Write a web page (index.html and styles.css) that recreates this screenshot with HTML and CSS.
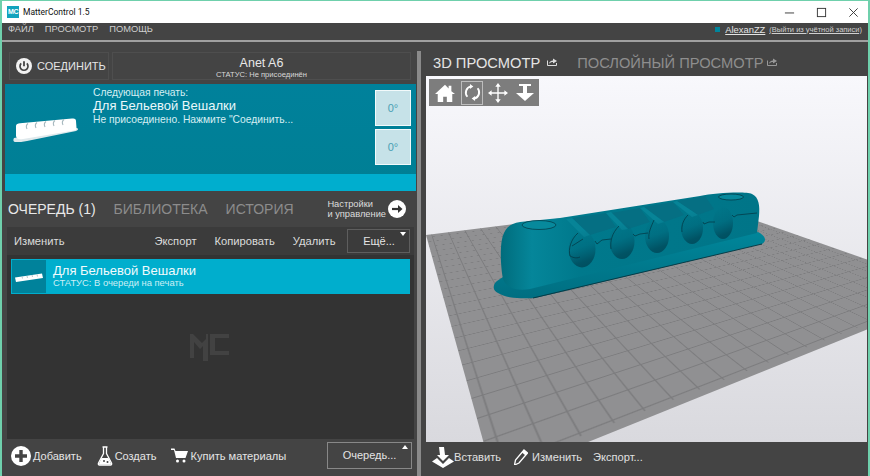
FILE: index.html
```html
<!DOCTYPE html>
<html lang="ru">
<head>
<meta charset="utf-8">
<title>MatterControl 1.5</title>
<link rel="stylesheet" href="styles.css">
</head>
<body>
<div class="window">
  <header class="titlebar">
    <span class="app-icon">MC</span>
    <span class="app-title">MatterControl 1.5</span>
    <div class="win-controls">
      <svg class="win-btn" viewBox="0 0 12 12"><path d="M1 6.500h10" stroke="#333" fill="none"/></svg>
      <svg class="win-btn" viewBox="0 0 12 12"><rect x="1.500" y="1.500" width="9" height="9" stroke="#333" fill="none"/></svg>
      <svg class="win-btn" viewBox="0 0 12 12"><path d="M1.500 1.500l9 9M10.500 1.500l-9 9" stroke="#333" fill="none"/></svg>
    </div>
  </header>

  <nav class="menubar">
    <span class="menu-item">ФАЙЛ</span>
    <span class="menu-item">ПРОСМОТР</span>
    <span class="menu-item">ПОМОЩЬ</span>
    <div class="account">
      <i class="account-dot"></i>
      <u class="account-name">AlexanZZ</u>
      <u class="account-out">(Выйти из учётной записи)</u>
    </div>
  </nav>

  <main class="main">
    <section class="left">
      <div class="connect-row">
        <div class="connect-btn">
          <svg class="ico-power" viewBox="0 0 16 16"><circle cx="8" cy="8" r="8" fill="#f2f2f2"/><path d="M5.200 5.400a4 4 0 1 0 5.600 0" stroke="#444" stroke-width="1.700" fill="none"/><path d="M8 3.200v5" stroke="#444" stroke-width="1.800"/></svg>
          <span>СОЕДИНИТЬ</span>
        </div>
        <div class="printer-box">
          <div class="printer-name">Anet A6</div>
          <div class="printer-status">СТАТУС: Не присоединён</div>
        </div>
      </div>

      <div class="print-panel">
        <div class="print-body">
          <svg class="print-thumb" viewBox="0 0 66 25">
            <path d="M1 20C0 22 0 24 3 24C6 24 10 24 14 23L63 13C65 12 66 11 64 10Z" fill="#dfe9ec"/>
            <path d="M3 8C3 6 5 5.500 7 5.300L59 .5C62 .2 63 1 63 3L63.500 10C63.500 11.500 63 12 61 12.500L10 21C6 21.800 3.500 21 3 18Z" fill="#fff"/>
            <path d="M15 5.500C13 7 13 9 14 11M24 4.500C22 6 22 8 23 10M33 3.500C31 5 31 7 32 9M42 2.500C40 4 40 6 41 8M51 1.500C49 3 49 5 50 7" stroke="#a6b8be" stroke-width="1.100" fill="none"/>
          </svg>
          <div class="print-text">
            <div class="print-next">Следующая печать:</div>
            <div class="print-name">Для Бельевой Вешалки</div>
            <div class="print-msg">Не присоединено. Нажмите "Соединить...</div>
          </div>
          <div class="temps">
            <div class="temp">0°</div>
            <div class="temp">0°</div>
          </div>
        </div>
        <div class="print-strip"></div>
      </div>

      <div class="tabs">
        <span class="tab active">ОЧЕРЕДЬ (1)</span>
        <span class="tab">БИБЛИОТЕКА</span>
        <span class="tab">ИСТОРИЯ</span>
        <div class="settings">
          <span class="settings-text">Настройки<br>и управление</span>
          <svg class="ico-arrow" viewBox="0 0 18 18"><circle cx="9" cy="9" r="9" fill="#fff"/><path d="M4 9h8" stroke="#333" stroke-width="2.200"/><path d="M10 5l4.500 4-4.500 4z" fill="#333"/></svg>
        </div>
      </div>

      <div class="queue">
        <div class="queue-tools">
          <span class="q-tool q-edit">Изменить</span>
          <span class="q-tool">Экспорт</span>
          <span class="q-tool">Копировать</span>
          <span class="q-tool">Удалить</span>
          <span class="more-btn dim">Ещё...<i class="caret"></i></span>
        </div>
        <div class="queue-list">
          <div class="queue-item">
            <div class="item-thumb">
              <svg viewBox="0 0 30 12" class="item-thumb-svg"><path d="M1 6.500L28 2.500 29 7 2 11z" fill="#fff"/><path d="M8 5.500l.5 2M13 5l.5 2M18 4l.5 2M23 3.500l.5 2" stroke="#a6b8be" stroke-width=".8" fill="none"/></svg>
            </div>
            <div class="item-text">
              <div class="item-name">Для Бельевой Вешалки</div>
              <div class="item-status">СТАТУС: В очереди на печать</div>
            </div>
          </div>
          <svg class="watermark" viewBox="0 0 40 30"><path d="M0 3h3l9 9 4-4V3h2v27h-5V15l-3 3L4 11v16H0zM20 3h19v4H25v13h14v4H20z" fill="#424242"/></svg>
        </div>
      </div>

      <div class="bottom-bar">
        <span class="action">
          <svg class="ico-plus" viewBox="0 0 20 20"><circle cx="10" cy="10" r="10" fill="#fff"/><path d="M10 4v12M4 10h12" stroke="#444" stroke-width="3.400"/></svg>
          <span>Добавить</span>
        </span>
        <span class="action act-create">
          <svg class="ico-flask" viewBox="0 0 16 20"><path d="M5.500 1h5M6.500 1.500v6L1.500 17c-.5 1 0 2 1 2h11c1 0 1.500-1 1-2L9.500 7.500v-6" stroke="#fff" stroke-width="1.300" fill="none"/><path d="M4.500 12h7l2.500 5.500c0 .5-.5 1-1 1H3c-.5 0-1-.5-1-1z" fill="#fff"/><circle cx="7" cy="15" r="1" fill="#444"/><circle cx="10.500" cy="16" r="1" fill="#444"/></svg>
          <span>Создать</span>
        </span>
        <span class="action act-buy">
          <svg class="ico-cart" viewBox="0 0 17 15"><path d="M0 .5h3.500l1 2.500H17l-2.500 7H5L3 2H0z" fill="#fff"/><circle cx="6.500" cy="13" r="1.500" fill="#fff"/><circle cx="13" cy="13" r="1.500" fill="#fff"/></svg>
          <span>Купить материалы</span>
        </span>
        <span class="more-btn queue-btn">Очередь...<i class="caret"></i></span>
      </div>
    </section>

    <div class="gutter"></div>

    <section class="right">
      <div class="view-tabs">
        <span class="view-tab active">3D ПРОСМОТР</span>
        <svg class="ico-share" viewBox="0 0 10 8"><path d="M.5 2.500v5h9V5" stroke="#ddd" fill="none"/><path d="M2 6c0-2 2-3.500 4-3.500V.500L10 3 6 5.500V4C4.500 4 3 4.500 2 6z" fill="#ddd"/></svg>
        <span class="view-tab second">ПОСЛОЙНЫЙ ПРОСМОТР</span>
        <svg class="ico-share ico-share-near" viewBox="0 0 10 8"><path d="M.5 2.500v5h9V5" stroke="#999" fill="none"/><path d="M2 6c0-2 2-3.500 4-3.500V.500L10 3 6 5.500V4C4.500 4 3 4.500 2 6z" fill="#999"/></svg>
      </div>

      <div class="viewport">
        <div class="bed"><div class="bed-grid"></div></div>
        <svg class="model" viewBox="426 75 441 366">
          <defs>
            <linearGradient id="endGrad" x1="0" x2="1" y1="0" y2="0">
              <stop offset="0" stop-color="#006c7c"/>
              <stop offset=".12" stop-color="#05869a"/>
              <stop offset=".3" stop-color="#00798c"/>
              <stop offset="1" stop-color="#007588"/>
            </linearGradient>
            <linearGradient id="holeGrad" x1=".35" x2=".6" y1="0" y2="1">
              <stop offset="0" stop-color="#00566a" stop-opacity="0"/>
              <stop offset=".45" stop-color="#00566a" stop-opacity=".25"/>
              <stop offset=".85" stop-color="#004f60" stop-opacity=".9"/>
              <stop offset="1" stop-color="#004f60"/>
            </linearGradient>
            <linearGradient id="flangeGrad" x1="0" x2="0" y1="0" y2="1">
              <stop offset="0" stop-color="#00869a"/>
              <stop offset="1" stop-color="#006e81"/>
            </linearGradient>
          </defs>
          <path d="M497 280C492 284 493 290 498 292C506 297 520 298 535 297L762 243C767 240 766 235 758 231L503 276Z" fill="url(#flangeGrad)"/>
          <path d="M533 297L762 243" stroke="#04343f" stroke-width=".9" fill="none"/>
          <path d="M503 278C500 260 500 240 504 232C508 223 515 221 530 220L560 217L700 195C715 192 745 190 752 193C759 196 760 205 759 215L757 232L530 288C515 291 505 285 503 278Z" fill="url(#endGrad)"/>
          <path d="M572 217L606 212L616 226L590 234Z" fill="#056f83"/>
          <path d="M611 212L640 207L650 221L628 228Z" fill="#056f83"/>
          <path d="M644 206L673 201L684 214L664 221Z" fill="#056f83"/>
          <path d="M677 200L705 195L714 208L698 214Z" fill="#056f83"/>
          <path d="M566 218L572 217L590 234L584 236Z" fill="#078497"/>
          <path d="M606 212L611 211L628 228L622 229Z" fill="#078497"/>
          <path d="M640 207L644 206L664 221L658 223Z" fill="#078497"/>
          <path d="M673 201L677 200L698 214L692 216Z" fill="#078497"/>
          <ellipse cx="582" cy="248" rx="13.500" ry="18.500" fill="url(#holeGrad)"/>
          <ellipse cx="622" cy="240" rx="12.500" ry="18" fill="url(#holeGrad)"/>
          <ellipse cx="657" cy="235" rx="12" ry="17" fill="url(#holeGrad)"/>
          <ellipse cx="692" cy="227" rx="11" ry="16" fill="url(#holeGrad)"/>
          <ellipse cx="723" cy="222" rx="10" ry="16" fill="url(#holeGrad)"/>
          <ellipse cx="539" cy="224" rx="17" ry="4.500" fill="#07899c" stroke="#04343f" stroke-width=".7"/>
          <ellipse cx="731" cy="196" rx="12.500" ry="3" fill="#07899c" stroke="#04343f" stroke-width=".7"/>
          <path d="M595 240l2 3 5-4 9-1M633 233l2 2 5-2 8-1M703 221l1 2 5-2 6 0M732 214l2 2 3-2 20-2M578 232C571 238 568 248 570 255M619 225C612 232 610 240 611 248M654 219C651 226 648 232 649 238M688 214C684 218 681 224 682 231M580 256C576 258 572 256 570 255M583 238L572 245" stroke="#04343f" stroke-width=".7" fill="none"/>
        </svg>
        <div class="view-tools">
          <svg class="tool-ico" viewBox="0 0 22 20"><path d="M11 1L0 11h3v9h6v-6h4v6h6v-9h3L18 8V2h-3v3z" fill="#fff"/></svg>
          <span class="tool-box">
            <svg class="tool-ico" viewBox="0 0 20 20"><path d="M4 15A7.500 7.500 0 0 1 8 2.800M16 5a7.500 7.500 0 0 1-4 12.200" stroke="#fff" stroke-width="2.200" fill="none"/><path d="M7 0l4 3-4 3zM13 20l-4-3 4-3z" fill="#fff"/></svg>
          </span>
          <svg class="tool-ico tool-move" viewBox="0 0 22 22"><path d="M11 2v18M2 11h18" stroke="#fff" stroke-width="1.500"/><path d="M11 0l3 4H8zM11 22l3-4H8zM0 11l4-3v6zM22 11l-4-3v6z" fill="#fff"/></svg>
          <svg class="tool-ico tool-drop" viewBox="0 0 20 20"><path d="M4 1h12v2h-4v7h7l-9 8-9-8h7V3H4z" fill="#fff"/></svg>
        </div>
      </div>

      <div class="view-bottom">
        <span class="action act-insert">
          <svg class="ico-insert" viewBox="0 0 22 22"><path d="M7 1h5l1 8h4l-6 6-6-6h3z" fill="#fff"/><path d="M5 12l6 6 6-6 5 3.500L11 22 0 15.500z" fill="#fff"/></svg>
          <span>Вставить</span>
        </span>
        <span class="action act-edit">
          <svg class="ico-pencil" viewBox="0 0 14 16"><path d="M10 1l3.500 3L5 14l-4.500 2L1.500 11z" fill="none" stroke="#fff" stroke-width="1.300"/><path d="M10 1l3.500 3-2 2.500L8 3.500z" fill="#fff"/></svg>
          <span>Изменить</span>
        </span>
        <span class="action act-export">Экспорт...</span>
      </div>
    </section>
  </main>
</div>
</body>
</html>
```

FILE: styles.css
```css
* { box-sizing: border-box; }
html, body { margin: 0; padding: 0; }
body {
  width: 870px;
  height: 476px;
  overflow: hidden;
  background: #444;
  font-family: "Liberation Sans", Arial, sans-serif;
  color: #e6e6e6;
}
.window {
  width: 870px;
  height: 476px;
  display: flex;
  flex-direction: column;
  border: solid #6fd0ac;
  border-width: 1px 2px 0 2px;
}

/* title bar */
.titlebar {
  height: 22px;
  flex: none;
  background: #fff;
  display: flex;
  align-items: center;
  padding-left: 5px;
  color: #111;
}
.app-icon {
  width: 12px;
  height: 12px;
  background: #12a3bd;
  color: #fff;
  font-size: 7px;
  font-weight: bold;
  line-height: 12px;
  text-align: center;
  letter-spacing: -.5px;
}
.app-title {
  margin-left: 4px;
  font: 8.500px Roboto, sans-serif;
}
.win-controls {
  margin-left: auto;
  display: flex;
  gap: 21px;
  padding-right: 9px;
}
.win-btn { width: 11px; height: 11px; display: block; }

/* menu */
.menubar {
  height: 19px;
  flex: none;
  display: flex;
  align-items: center;
  padding: 0 3px 5px 6px;
  gap: 11px;
  border-bottom: 2px solid #a0a0a0;
  font-size: 9.300px;
  color: #cfcfcf;
}
.account {
  margin-left: auto;
  display: flex;
  align-items: center;
  gap: 4px;
  padding-right: 3px;
}
.account-dot { width: 5px; height: 5px; background: #00859c; margin-right: 1px; }
.account-name { font-size: 9.400px; color: #e4e4e4; }
.account-out { font-size: 7.500px; color: #d0d0d0; }

/* layout */
.main {
  flex: 1;
  display: flex;
  min-height: 0;
  padding-left: 3px;
}
.left {
  width: 411px;
  flex: none;
  display: flex;
  flex-direction: column;
}
.gutter {
  width: 4px;
  flex: none;
  margin: 9px 5px 0 1px;
  background: #8a8a8a;
}
.right {
  flex: 1;
  min-width: 0;
  display: flex;
  flex-direction: column;
}

/* connect */
.connect-row {
  display: flex;
  gap: 3px;
  padding: 10px 5px 4px 4px;
  height: 42px;
  flex: none;
}
.connect-btn, .printer-box { border: 1px solid #4e4e4e; }
.connect-btn {
  width: 100px;
  display: flex;
  align-items: center;
  gap: 5px;
  padding-left: 6px;
  font-size: 11px;
  color: #e6e6e6;
}
.ico-power { width: 16px; height: 16px; flex: none; }
.printer-box {
  flex: 1;
  text-align: center;
  padding-top: 3px;
}
.printer-name { font-size: 12.500px; line-height: 14px; color: #e8e8e8; }
.printer-status { font-size: 7.600px; line-height: 9px; color: #d8d8d8; }

/* current print */
.print-panel {
  height: 107px;
  flex: none;
  display: flex;
  flex-direction: column;
  background: linear-gradient(#00819b, #007f94);
}
.print-body {
  flex: 1;
  display: flex;
  padding: 3px 5px 0 8px;
}
.print-thumb { width: 66px; height: 25px; margin-top: 31px; flex: none; }
.print-text { margin-left: 14px; color: #d5eef3; }
.print-next { font-size: 10.300px; line-height: 12px; }
.print-name { font-size: 13px; line-height: 13px; color: #eaf8fb; }
.print-msg { font-size: 10.300px; line-height: 15px; }
.temps {
  margin-left: auto;
  display: flex;
  flex-direction: column;
  gap: 3px;
  padding-top: 3px;
}
.temp {
  width: 36px;
  height: 36px;
  background: #c6e2e8;
  border: 1px solid #f2fafb;
  color: #4aa0b4;
  font-size: 11px;
  display: flex;
  align-items: center;
  justify-content: center;
}
.print-strip { height: 17px; flex: none; background: #00aece; }

/* tabs */
.tabs {
  height: 36px;
  flex: none;
  display: flex;
  align-items: center;
  padding: 0 10px 0 3px;
  gap: 18px;
}
.tab { font-size: 14px; color: #8c8c8c; }
.tab.active { color: #e8e8e8; }
.settings {
  margin-left: auto;
  display: flex;
  align-items: center;
  gap: 2px;
}
.settings-text { font-size: 9.300px; line-height: 10px; color: #ddd; }
.ico-arrow { width: 18px; height: 18px; }

/* queue */
.queue {
  flex: 1;
  min-height: 0;
  display: flex;
  flex-direction: column;
  margin: 0 2px;
  background: #333;
}
.queue-tools {
  height: 28px;
  flex: none;
  background: #3b3b3b;
  display: flex;
  align-items: center;
  padding-left: 7px;
  gap: 18px;
  font-size: 11.200px;
  color: #dcdcdc;
}
.q-edit { margin-right: 72px; }
.more-btn {
  position: relative;
  display: flex;
  align-items: center;
  justify-content: center;
  border: 1px solid #888;
  font-size: 11px;
  color: #e4e4e4;
}
.more-btn.dim {
  width: 63px;
  height: 24px;
  margin-left: -6px;
  border-color: #5e5e5e;
}
.caret {
  position: absolute;
  top: 2px;
  right: 3px;
  border: solid transparent;
  border-width: 0 3.500px 4px;
  border-bottom-color: #fff;
}
.more-btn.dim .caret { transform: rotate(180deg); }
.queue-list {
  flex: 1;
  position: relative;
  padding: 4px 4px 0;
}
.queue-item {
  height: 35px;
  display: flex;
  background: #00aecd;
  padding: 1px;
}
.item-thumb {
  width: 34px;
  background: #00829b;
  display: flex;
  align-items: center;
  justify-content: center;
  flex: none;
}
.item-thumb-svg { width: 30px; height: 12px; }
.item-text { margin-left: 7px; }
.item-name { font-size: 13px; line-height: 15px; margin-top: 3px; color: #f2fbfd; }
.item-status { font-size: 9.400px; line-height: 10px; color: #cdeef5; }
.watermark {
  position: absolute;
  left: 183px;
  top: 76px;
  width: 40px;
  height: 30px;
}

/* bottom */
.bottom-bar {
  height: 37px;
  flex: none;
  display: flex;
  align-items: center;
  padding: 0 4px 4px 6px;
  font-size: 11px;
  color: #e4e4e4;
}
.action { display: flex; align-items: center; gap: 2px; }
.ico-plus { width: 20px; height: 20px; }
.act-create { margin-left: 15px; gap: 2px; }
.ico-flask { width: 16px; height: 20px; }
.act-buy { margin-left: 15px; gap: 2px; font-size: 11.100px; }
.ico-cart { width: 17px; height: 15px; }
.queue-btn {
  margin-left: auto;
  width: 85px;
  height: 27px;
  margin-top: -1px;
}

/* right */
.view-tabs {
  height: 34px;
  flex: none;
  display: flex;
  align-items: center;
  padding: 8px 0 0 7px;
}
.view-tab { font-size: 14.700px; color: #e4e4e4; }
.view-tab.second { color: #8e8e8e; margin-left: 20px; }
.ico-share { width: 10px; height: 8px; margin: -3px 0 0 7px; }
.ico-share.ico-share-near { margin-left: 4px; }
.viewport {
  flex: none;
  height: 366px;
  width: 441px;
  position: relative;
  overflow: hidden;
  background: linear-gradient(#f8f8fc, #d9d9de);
}
.bed {
  position: absolute;
  left: 0;
  top: 0;
  width: 220px;
  height: 220px;
  transform-origin: 0 0;
  transform: matrix3d(1.73209, .06746, 0, .001776, .11436, -.04332, 0, -.0028637, 0, 0, 1, 0, 0, 159, 0, 1);
  background: #909092;
}
.bed-grid {
  height: 217px;
  background-image:
    linear-gradient(#7c7c7e, #7c7c7e .45px, transparent .75px),
    linear-gradient(90deg, #7c7c7e, #7c7c7e .45px, transparent .75px);
  background-size: 10px 10px;
  background-position: 3px 5.500px;
}
.model { position: absolute; inset: 0; width: 441px; height: 366px; }
.view-tools {
  position: absolute;
  left: 3px;
  top: 3px;
  width: 110px;
  height: 27px;
  background: #7d7d7d;
  display: flex;
  align-items: center;
  padding-left: 6px;
}
.tool-ico { width: 20px; height: 20px; flex: none; display: block; }
.tool-box {
  margin-left: 6px;
  width: 22px;
  height: 24px;
  border: 1px solid #bdbdbd;
  display: flex;
  align-items: center;
  justify-content: center;
}
.tool-box .tool-ico { width: 17px; height: 17px; }
.tool-move { margin-left: 5px; }
.tool-drop { margin-left: 7px; }
.view-bottom {
  flex: 1;
  display: flex;
  align-items: center;
  padding: 0 0 4px 6px;
  font-size: 11.100px;
  color: #e0e0e0;
}
.ico-insert { width: 22px; height: 22px; }
.act-insert { gap: 0; }
.act-edit { margin-left: 13px; gap: 4px; }
.ico-pencil { width: 14px; height: 16px; }
.act-export { margin-left: 11px; }
```
